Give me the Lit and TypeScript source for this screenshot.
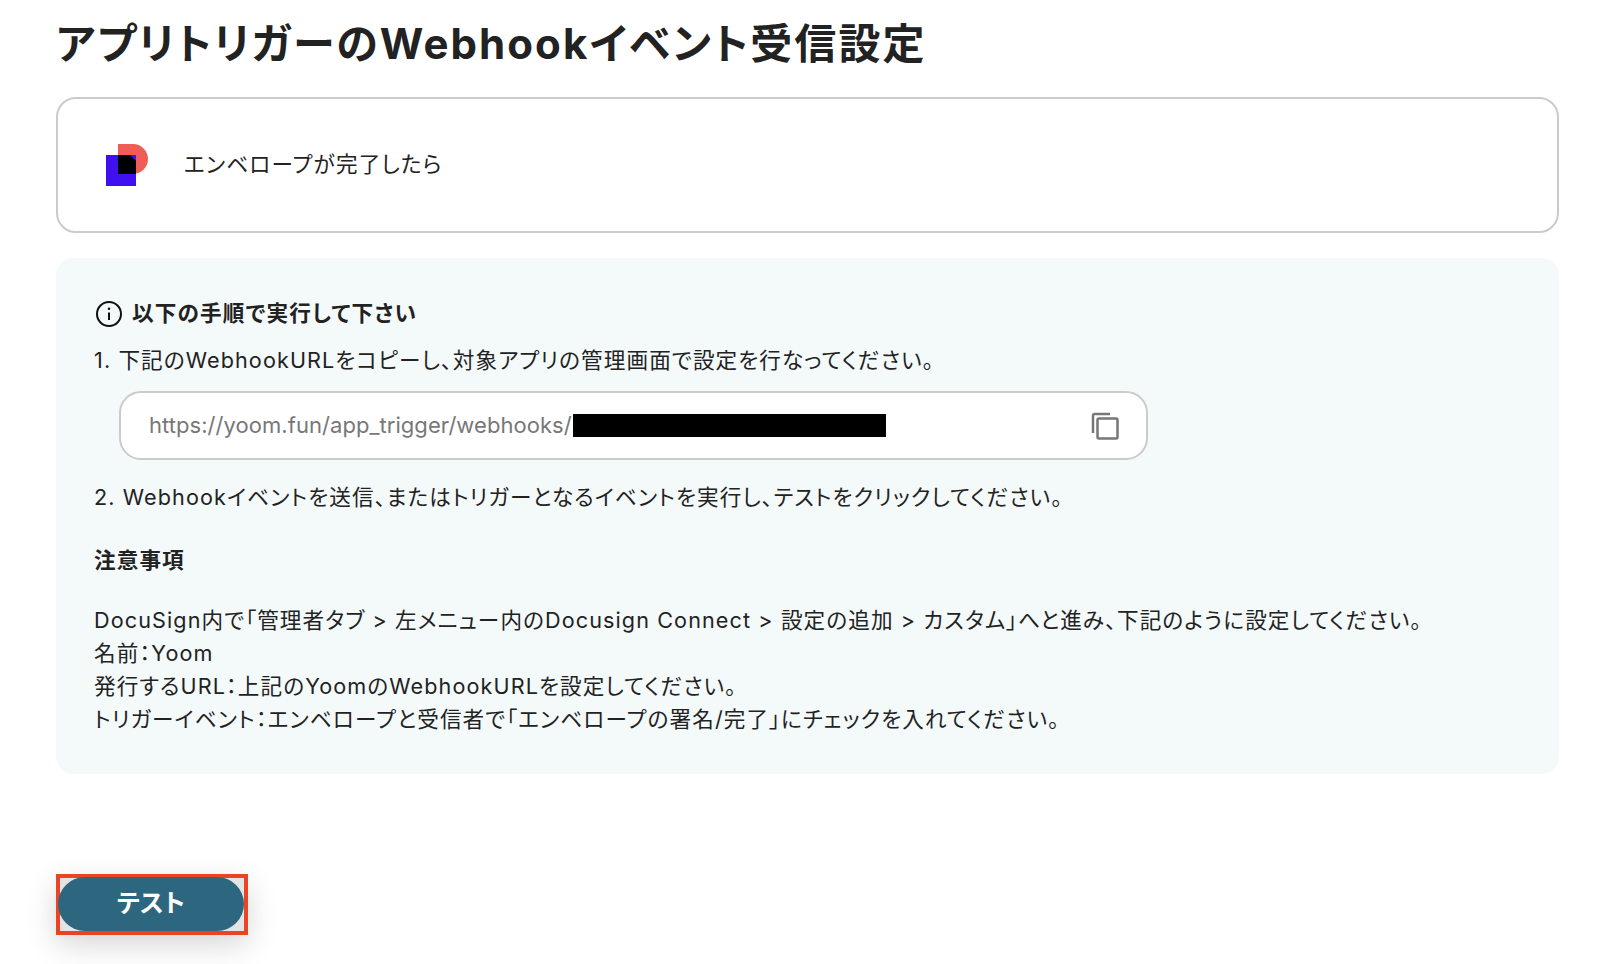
import { LitElement, html, css } from "lit";
import { customElement } from "lit/decorators.js";

@customElement("app-root")
export class AppRoot extends LitElement {
  static styles = css`
    :host {
      display: block;
      width: 1600px;
      height: 964px;
      overflow: hidden;
      background: #fff;
      color: #222;
      font-family: Inter, "Noto Sans CJK JP", sans-serif;
      font-feature-settings: "palt";
    }
    .page {
      display: flex;
      flex-direction: column;
      padding: 14px 41px 0 56px;
    }
    h1 {
      margin: 0;
      font-size: 42px;
      line-height: 60px;
      font-weight: 700;
      letter-spacing: 2.08px;
      color: #222;
    }
    .card {
      box-sizing: border-box;
      height: 136px;
      margin-top: 23px;
      border: 2px solid #cbcbcb;
      border-radius: 20px;
      display: flex;
      align-items: center;
      gap: 34px;
      padding-left: 48px;
      font-size: 21.6px;
      letter-spacing: 1.15px;
      line-height: 32px;
    }
    .card span {
      margin-top: -2px;
    }
    .logo {
      width: 44px;
      height: 44px;
      display: block;
    }
    .panel {
      box-sizing: border-box;
      height: 516px;
      margin-top: 25px;
      background: #f4f9fa;
      border-radius: 18px;
      padding: 39px 38px 0;
      font-size: 21.6px;
      letter-spacing: 1.1px;
      line-height: 33px;
    }
    .head {
      display: flex;
      align-items: center;
      gap: 9px;
      font-weight: 700;
      letter-spacing: 1.2px;
      padding-left: 1px;
    }
    .head svg {
      width: 28px;
      height: 28px;
    }
    p {
      margin: 0;
    }
    .step1 {
      margin-top: 14px;
    }
    .url {
      box-sizing: border-box;
      width: 1029px;
      height: 69px;
      margin: 14px 0 21px 25px;
      background: #fff;
      border: 2px solid #cbcbcb;
      border-radius: 22px;
      display: flex;
      align-items: center;
      padding: 0 26px 0 28px;
      color: #777;
      font-size: 22px;
      letter-spacing: 0.05px;
    }
    .mask {
      width: 313px;
      height: 23px;
      background: #000;
      margin-left: 1px;
    }
    .copy {
      margin-left: auto;
      width: 30px;
      height: 30px;
    }
    .note {
      font-weight: 700;
      margin-top: 30px;
    }
    .notes {
      margin-top: 27px;
    }
    .btn-mark {
      box-sizing: border-box;
      width: 192px;
      height: 61px;
      margin-top: 100px;
      border: 4px solid #ea4420;
      background: #e4e4e4;
      box-shadow: 0 10px 30px rgba(0, 0, 0, 0.16);
      display: flex;
    }
    button {
      flex: 1;
      margin: -1px 0 0 -2px;
      border: 0;
      padding: 0 0 6px;
      border-radius: 27px;
      background: #2d667f;
      color: #fff;
      font: inherit;
      font-size: 25px;
      font-weight: 700;
      letter-spacing: 0.3px;
    }
  `;

  render() {
    return html`
      <div class="page">
        <h1>アプリトリガーのWebhookイベント受信設定</h1>
        <section class="card">
          <svg class="logo" viewBox="0 0 44 44">
            <path fill="#f05d56" d="M12 1H27A15 15 0 0 1 27 31H12Z" />
            <rect fill="#4010f0" x="0" y="12" width="30" height="31" />
            <path fill="#000" d="M12 12H24L30 18V31H12Z" />
          </svg>
          <span>エンベロープが完了したら</span>
        </section>
        <section class="panel">
          <div class="head">
            <svg viewBox="0 0 28 28" fill="none" stroke="#111" stroke-width="2">
              <circle cx="14" cy="14" r="12" />
              <path d="M14 12.500V20" />
              <circle cx="14" cy="8.800" r="1.300" fill="#111" stroke="none" />
            </svg>
            <span>以下の手順で実行して下さい</span>
          </div>
          <p class="step1">1. 下記のWebhookURLをコピーし、対象アプリの管理画面で設定を行なってください。</p>
          <div class="url">
            <span>https://yoom.fun/app_trigger/webhooks/</span>
            <span class="mask"></span>
            <svg class="copy" viewBox="0 0 30 30" fill="none" stroke="#777" stroke-width="2.500">
              <path d="M3 22V4.500A1.500 1.500 0 0 1 4.500 3H20" />
              <rect x="7.500" y="7.500" width="20" height="20" rx="1.500" />
            </svg>
          </div>
          <p>2. Webhookイベントを送信、またはトリガーとなるイベントを実行し、テストをクリックしてください。</p>
          <p class="note">注意事項</p>
          <div class="notes">
            <p>DocuSign内で「管理者タブ > 左メニュー内のDocusign Connect > 設定の追加 > カスタム」へと進み、下記のように設定してください。</p>
            <p>名前：Yoom</p>
            <p>発行するURL：上記のYoomのWebhookURLを設定してください。</p>
            <p>トリガーイベント：エンベロープと受信者で「エンベロープの署名/完了」にチェックを入れてください。</p>
          </div>
        </section>
        <div class="btn-mark"><button>テスト</button></div>
      </div>
    `;
  }
}
